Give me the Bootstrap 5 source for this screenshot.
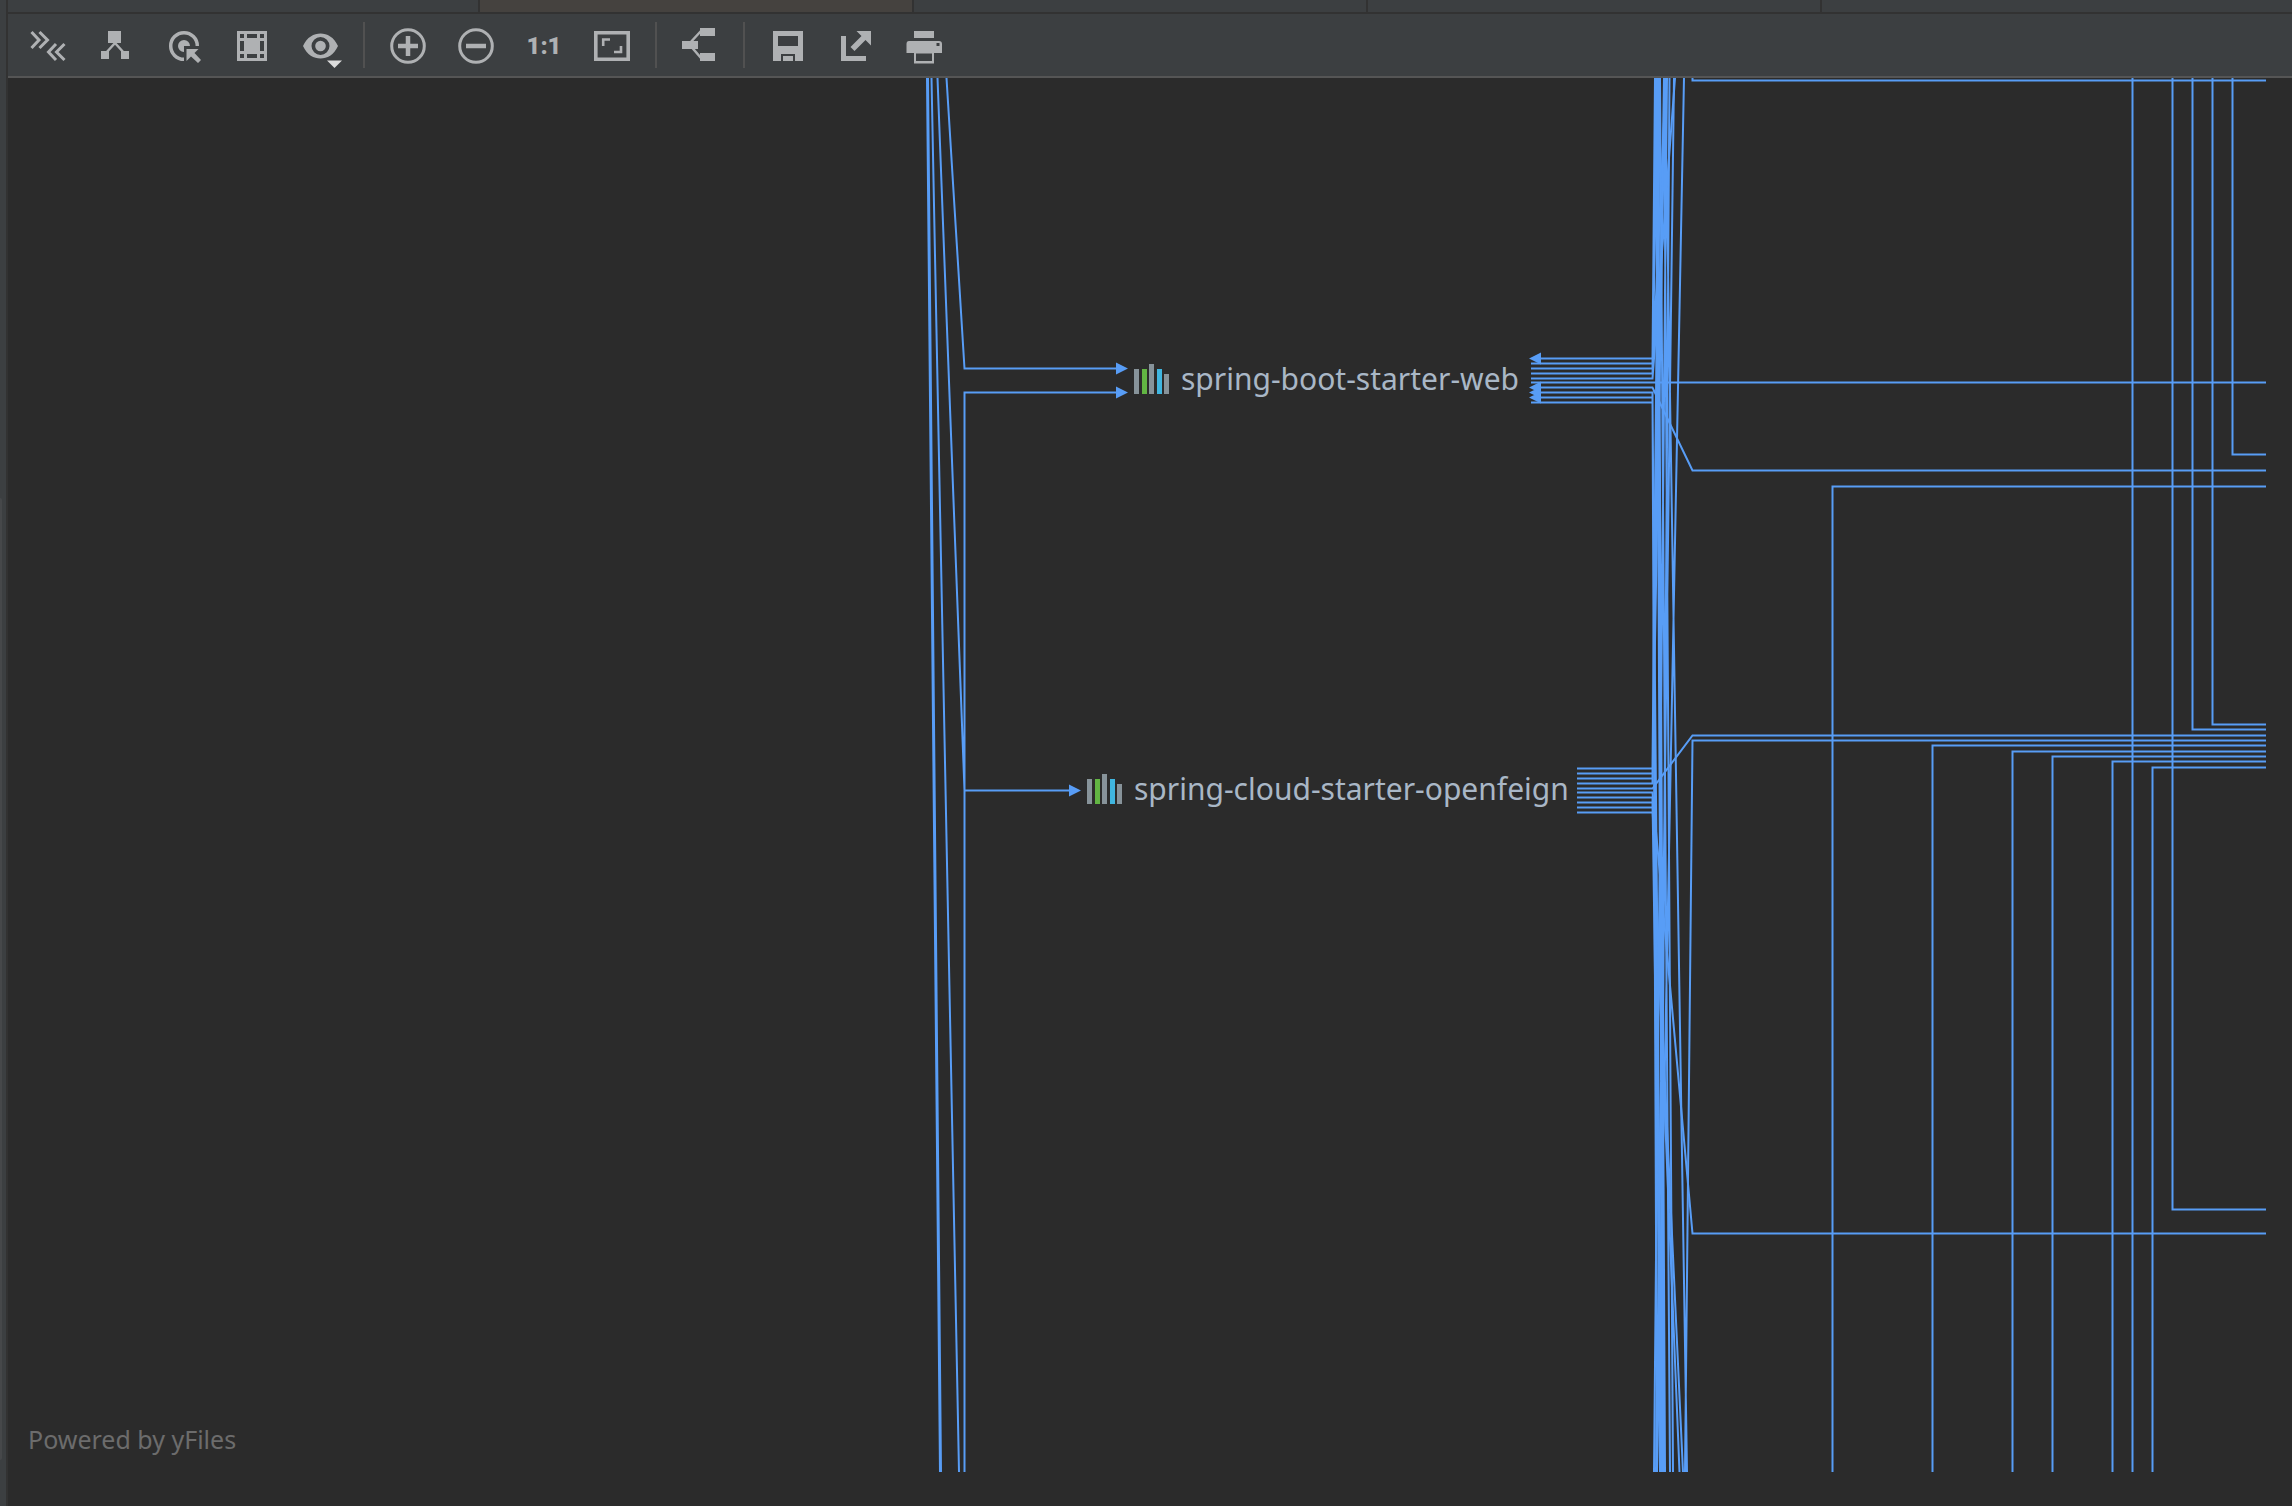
<!DOCTYPE html>
<html lang="en">
<head>
<meta charset="utf-8">
<meta name="viewport" content="width=device-width, initial-scale=1">
<title>Dependency diagram</title>
<link href="https://cdn.jsdelivr.net/npm/bootstrap@5.3.0/dist/css/bootstrap.min.css" rel="stylesheet">
<script src="https://cdn.jsdelivr.net/npm/bootstrap@5.3.0/dist/js/bootstrap.bundle.min.js"></script>
<style>
  body { background: #3c3f41; font-family: "Noto Sans", "Open Sans", sans-serif; color: #a9b7c6; }
  .side-rail { width: 8px; border-right: 2px solid #323232; padding-top: 498px; padding-bottom: 46px; }
  .side-thumb { width: 2px; background: #46484a; border-radius: 0 2px 2px 0; }
  .tab-strip { height: 14px; border-bottom: 2px solid #323232; }
  .tab-slot { width: 454px; border-right: 2px solid #323232; }
  .tab-first { width: 472px; }
  .tab-active { width: 434px; background: #45423f; }
  .tool-row { height: 64px; padding: 10px 6px 0; border-bottom: 2px solid #555555; }
  .tool-btn { width: 68px; height: 44px; color: #afb1b3; background: none; }
  .tool-btn:hover { background: #4c5052; }
  .tool-btn svg { width: 44px; height: 44px; overflow: visible; display: block; }
  .tool-sep { width: 2px; height: 46px; margin: -2px 9px 0; background: #515151; }
  .zoom-text { font: 900 24px/44px Roboto, "Liberation Sans", sans-serif; }
  .canvas { background: #2b2b2b; }
  .edges { inset: 0; width: 100%; height: 100%; }
  .node { font-size: 30px; line-height: 40px; gap: 11px; white-space: nowrap; }
  .node svg { width: 36px; height: 30px; }
  .node-web { left: 1126px; top: 281px; }
  .node-feign { left: 1079px; top: 691px; }
  .credit { left: 20px; bottom: 49px; font-size: 25px; line-height: 36px; color: #6c6c6c; }
</style>
</head>
<body class="vh-100 d-flex overflow-hidden">
<aside class="side-rail d-flex flex-shrink-0"><div class="side-thumb"></div></aside>
<div class="d-flex flex-column flex-grow-1 overflow-hidden">
  <div class="tab-strip d-flex flex-shrink-0">
    <div class="tab-slot tab-first"></div>
    <div class="tab-slot tab-active"></div>
    <div class="tab-slot"></div>
    <div class="tab-slot"></div>
  </div>
  <div class="tool-row d-flex flex-shrink-0" role="toolbar" aria-label="Diagram tools">
    <button class="tool-btn btn border-0 p-0 d-flex justify-content-center" aria-label="Collapse"><svg viewBox="26 24 44 44" fill="none" stroke="currentColor" stroke-width="3"><path d="M31.5 32l7.5 8-7.5 8M39.5 32l8 8-8 8M56 44l-7.5 8 7.5 8M64.500 44l-8 8 8 8"/></svg></button>
    <button class="tool-btn btn border-0 p-0 d-flex justify-content-center" aria-label="Structure"><svg viewBox="94 24 44 44" fill="currentColor"><path d="M108 31h13v12h-13zM101 51h8v8h-8zM121 51h8v8h-8z"/><path d="M105 54l10-11 10 11" fill="none" stroke="currentColor" stroke-width="2.500"/></svg></button>
    <button class="tool-btn btn border-0 p-0 d-flex justify-content-center" aria-label="Focus"><svg viewBox="162 24 44 44" fill="currentColor"><path d="M197.300 46A13.300 13.300 0 1 0 184 59.300" fill="none" stroke="currentColor" stroke-width="3.500"/><path d="M190 46a6 6 0 1 0-6 6v-6z"/><path d="M186.500 49H198.500l-4 4 6.500 7-3 3-7-6.500-4.500 4.500z"/></svg></button>
    <button class="tool-btn btn border-0 p-0 d-flex justify-content-center" aria-label="Fit nodes"><svg viewBox="230 24 44 44" fill="currentColor"><path fill-rule="evenodd" d="M237 31h30v30h-30zM240 34v4h4v-4zM247 34v4h10v-4zM260 34v4h4v-4zM240 41v10h4v-10zM260 41v10h4v-10zM240 54v4h4v-4zM247 54v4h10v-4zM260 54v4h4v-4z"/></svg></button>
    <button class="tool-btn btn border-0 p-0 d-flex justify-content-center" aria-label="Visibility"><svg viewBox="298 24 44 44" fill="currentColor"><path fill-rule="evenodd" d="M303 46C307 37 314 33.500 320.500 33.500S334 37 338 46C334 55 327 58.500 320.500 58.500S307 55 303 46zM320.500 37a9 9 0 1 0 0 18 9 9 0 1 0 0-18z"/><circle cx="320.500" cy="46" r="5.300"/><path d="M327 60.500h15l-7.500 7.500z" fill="#dcdcdc"/></svg></button>
    <span class="tool-sep"></span>
    <button class="tool-btn btn border-0 p-0 d-flex justify-content-center" aria-label="Zoom in"><svg viewBox="386 24 44 44" fill="none" stroke="currentColor"><circle cx="408" cy="46" r="16.300" stroke-width="3"/><path d="M398 46h20M408 36v20" stroke-width="4.500"/></svg></button>
    <button class="tool-btn btn border-0 p-0 d-flex justify-content-center" aria-label="Zoom out"><svg viewBox="454 24 44 44" fill="none" stroke="currentColor"><circle cx="476" cy="46" r="16.300" stroke-width="3"/><path d="M466 46h20" stroke-width="4.500"/></svg></button>
    <button class="tool-btn zoom-text btn border-0 p-0">1:1</button>
    <button class="tool-btn btn border-0 p-0 d-flex justify-content-center" aria-label="Fit content"><svg viewBox="590 24 44 44" fill="none" stroke="currentColor"><path d="M595.800 32.800h32.400v26.400h-32.400z" stroke-width="3.600"/><path d="M603.200 46v-6.500H610M614 52h7v-6" stroke-width="2.600"/></svg></button>
    <span class="tool-sep"></span>
    <button class="tool-btn btn border-0 p-0 d-flex justify-content-center" aria-label="Layout"><svg viewBox="678 24 44 44" fill="currentColor"><path d="M682 41h16v8h-16zM700 28h15v8h-15zM700 53h15v8h-15z"/><path d="M701 31L689 44l12 14" fill="none" stroke="currentColor" stroke-width="2.500"/></svg></button>
    <span class="tool-sep"></span>
    <button class="tool-btn btn border-0 p-0 d-flex justify-content-center" aria-label="Save"><svg viewBox="766 24 44 44" fill="currentColor"><path fill-rule="evenodd" d="M773 31h30v30h-8v-7h-14v7h-8zM778 36v10h20v-10z"/><path d="M783 56h10v5h-10z"/></svg></button>
    <button class="tool-btn btn border-0 p-0 d-flex justify-content-center" aria-label="Export"><svg viewBox="834 24 44 44" fill="currentColor"><path d="M841 36h5v20h20v5h-25zM856.500 31H871v14.500l-5.500-5.500-11 11-4-4 11-11z"/></svg></button>
    <button class="tool-btn btn border-0 p-0 d-flex justify-content-center" aria-label="Print"><svg viewBox="902 24 44 44" fill="currentColor"><path d="M914 31h20v7h-20z"/><path fill-rule="evenodd" d="M909 41h30q3 0 3 3v9h-8v10.500h-20V53h-7.500v-9q0-3 2.500-3zM936.500 43v3h3v-3zM916 53.500V61h16v-7.500z"/></svg></button>
  </div>

  <main class="canvas position-relative flex-grow-1 overflow-hidden">
    <svg class="edges position-absolute" aria-hidden="true">
      <defs><clipPath id="view"><rect x="0" y="0" width="2258" height="1394"/></clipPath></defs>
      <g clip-path="url(#view)"><g transform="translate(-8 -78)" fill="none" stroke="#589df6" stroke-width="2">
        <!-- edges into the two nodes from the left -->
        <path d="M927 78L940 1472M928 78L941 1472M931.500 78L959 1472M937.500 78L964.500 790.500H1070M946.500 78L964.500 368.500H1117M964.500 1472V392.500H1117"/>
        <!-- starter-web ports -->
        <path d="M1540 358.500H1652.500L1655 78M1531 363.500H1652.500L1656 78M1531 368.500H1652.500L1658 78M1531 373.500H1652.500L1666 78M1531 378.500H1652.500L1675 78M1531 382.500H2266M1540 387.500H1652.500L1692.500 470.500H2266M1540 392.500H1652.500L1657 1472M1540 397.500H1652.500L1660 1472M1531 402.500H1652.500L1662 1472"/>
        <!-- starter-openfeign ports -->
        <path d="M1577 768.500H1652.500L1659 78M1577 773.500H1652.500L1660 78M1577 778.500H1652.500L1664 78M1577 783.500H1652.500L1665 78M1577 788.500H1652.500L1692.500 735.500H2266M1577 792.500H1652.500L1692.500 1233.500H2266M1577 797.500H1652.500L1662 1472M1577 802.500H1652.500L1664 1472M1577 807.500H1652.500L1679.500 1472M1577 812.500H1652.500L1683 1472"/>
        <!-- edges passing through -->
        <path d="M1656 78L1663 1472M1658 78L1665 1472M1660 78L1670 1472M1664 78L1673 1472M1665 78L1687 1472M1667 78L1654 1472M1669.500 78L1660 1472M1674 78L1656 1472M1684 78L1657 1472M2266 740.500H1692.500L1685 1472M1692.500 70V80.500H2266"/>
        <path d="M1832.500 1472V486.500H2266M1932.500 1472V745.500H2266M2012.500 1472V751.500H2266M2052.500 1472V756.500H2266M2112.500 1472V761.500H2266M2152.500 1472V767.500H2266M2132.500 70V1472M2172.500 70V1209.500H2266M2192.500 70V729.500H2266M2212.500 70V724.500H2266M2232.500 70V454.500H2266"/>
        <path fill="#589df6" stroke="none" d="M1128 368.500l-12-6v12zM1128 392.500l-12-6v12zM1081 790.500l-12-6v12zM1529 358.500l12-6v12zM1529 387.500l12-6v12zM1529 392.500l12-6v12zM1529 397.500l12-6v12z"/>
      </g></g>
    </svg>
    <div class="node node-web position-absolute d-flex align-items-center">
      <svg viewBox="0 0 36 30" aria-hidden="true"><path fill="#87939a" d="M0 5h5v25H0zM15 0h5v30h-5zM30 10h5v20h-5z"/><path fill="#62b543" d="M8 5h5v25H8z"/><path fill="#40b6e0" d="M23 5h5v25h-5z"/></svg>
      <span>spring-boot-starter-web</span>
    </div>
    <div class="node node-feign position-absolute d-flex align-items-center">
      <svg viewBox="0 0 36 30" aria-hidden="true"><path fill="#87939a" d="M0 5h5v25H0zM15 0h5v30h-5zM30 10h5v20h-5z"/><path fill="#62b543" d="M8 5h5v25H8z"/><path fill="#40b6e0" d="M23 5h5v25h-5z"/></svg>
      <span>spring-cloud-starter-openfeign</span>
    </div>
    <div class="credit position-absolute">Powered by yFiles</div>
  </main>
</div>
</body>
</html>
